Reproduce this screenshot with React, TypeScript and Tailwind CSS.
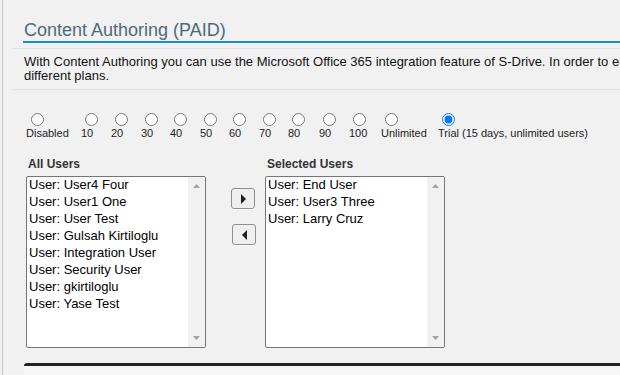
import React from "react";

const allUsers = [
  "User: User4 Four",
  "User: User1 One",
  "User: User Test",
  "User: Gulsah Kirtiloglu",
  "User: Integration User",
  "User: Security User",
  "User: gkirtiloglu",
  "User: Yase Test",
];

const selectedUsers = ["User: End User", "User: User3 Three", "User: Larry Cruz"];

const options: { label: string; w: string; checked?: boolean }[] = [
  { label: "Disabled", w: "w-[55px]" },
  { label: "10", w: "w-[30px]" },
  { label: "20", w: "w-[30px]" },
  { label: "30", w: "w-[29px]" },
  { label: "40", w: "w-[30px]" },
  { label: "50", w: "w-[29px]" },
  { label: "60", w: "w-[30px]" },
  { label: "70", w: "w-[29px]" },
  { label: "80", w: "w-[31px]" },
  { label: "90", w: "w-[30px]" },
  { label: "100", w: "w-[32px]" },
  { label: "Unlimited", w: "w-[57px]" },
  { label: "Trial (15 days, unlimited users)", w: "w-[180px]", checked: true },
];

function ListBox({ items }: { items: string[] }) {
  return (
    <div className="w-[180px] h-[172px] border border-[#767676] rounded-[2px] bg-white flex overflow-hidden">
      <div className="flex-1 flex flex-col">
        {items.map((u) => (
          <div key={u} className="h-[17px] pl-[2px] text-[13px] leading-[15px] text-black whitespace-nowrap">
            {u}
          </div>
        ))}
      </div>
      <div className="w-[17px] bg-[#f1f1f1] flex flex-col items-center justify-between pt-[7px] pb-[7px]">
        <svg width="7" height="4" viewBox="0 0 7 4">
          <polygon points="3.5,0 7,4 0,4" fill="#a3a3a3" />
        </svg>
        <svg width="7" height="4" viewBox="0 0 7 4">
          <polygon points="0,0 7,0 3.5,4" fill="#a3a3a3" />
        </svg>
      </div>
    </div>
  );
}

function MoveButton({ dir }: { dir: "right" | "left" }) {
  return (
    <button
      type="button"
      className="w-[24px] h-[21px] border border-[#8f8f8f] rounded-[3px] bg-[#efefef] shadow-[0_1px_0_#ffffff] flex items-center justify-center"
    >
      <svg width="5" height="10" viewBox="0 0 5 10">
        {dir === "right" ? (
          <polygon points="0,0 5,5 0,10" fill="#1e1e1e" />
        ) : (
          <polygon points="5,0 0,5 5,10" fill="#1e1e1e" />
        )}
      </svg>
    </button>
  );
}

export default function App() {
  return (
    <div className="w-[620px] h-[375px] overflow-hidden bg-[#f1f1f1] font-['Liberation_Sans',Arial,sans-serif]">
      <div className="ml-[2px] h-full border-l border-[#c6c6c6] flex flex-col">
        <div className="ml-[20px] pt-[20px] border-b-2 border-[#1a8fc0]">
          <h2 className="pl-[1px] text-[18px] leading-[21px] text-[#4f6a7f] whitespace-nowrap font-normal">
            Content Authoring (PAID)
          </h2>
        </div>

        <div className="ml-[10px] mt-[5px] border-y border-[#e2e2e2] pl-[11px] pt-[6px] pb-[6px] text-[13px] leading-[14px] text-[#111] whitespace-nowrap overflow-hidden">
          With Content Authoring you can use the Microsoft Office 365 integration feature of S-Drive. In order to enable this feature, please choose one of the
          <br />
          different plans.
        </div>

        <div className="ml-[23px] mt-[23px] flex">
          {options.map((o) => (
            <label key={o.label} className={`${o.w} shrink-0 flex flex-col items-start`}>
              <input
                type="radio"
                name="plan"
                defaultChecked={o.checked}
                className={`m-0 w-[13px] h-[13px] ${o.label === "Disabled" ? "ml-[5px]" : "ml-[4px]"}`}
              />
              <span className="mt-[1px] text-[11px] leading-[13px] text-[#222] whitespace-nowrap">{o.label}</span>
            </label>
          ))}
        </div>

        <div className="ml-[23px] mt-[17px] grid grid-cols-[180px_59px_180px]">
          <div className="pl-[2px] text-[12px] leading-[14px] font-bold text-[#333]">All Users</div>
          <div />
          <div className="pl-[2px] text-[12px] leading-[14px] font-bold text-[#333]">Selected Users</div>

          <div className="mt-[5px]">
            <ListBox items={allUsers} />
          </div>
          <div className="mt-[5px] pl-[25px] pt-[12px] flex flex-col items-start gap-[15px]">
            <MoveButton dir="right" />
            <div className="ml-[1px]">
              <MoveButton dir="left" />
            </div>
          </div>
          <div className="mt-[5px]">
            <ListBox items={selectedUsers} />
          </div>
        </div>

        <div className="ml-[21px] mt-[15px] flex-1 border-t-[3px] border-[#222] rounded-tl-[3px] bg-[#f7f7f7]" />
      </div>
    </div>
  );
}
